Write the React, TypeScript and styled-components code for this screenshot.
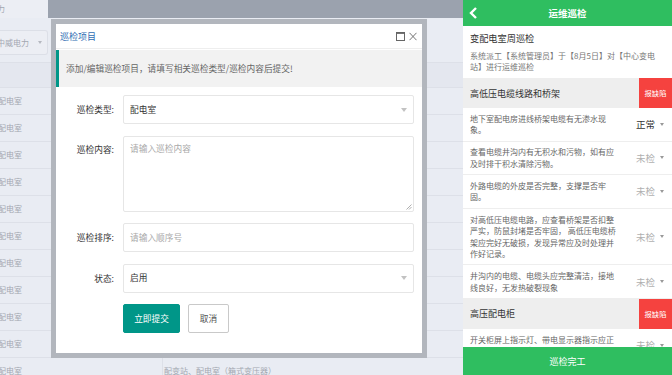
import styled, { createGlobalStyle } from 'styled-components'

const GlobalStyle = createGlobalStyle`
  html, body {
    margin: 0;
    padding: 0;
  }
  body {
    width: 672px;
    height: 375px;
    overflow: hidden;
    font-family: "Noto Sans CJK SC", "Liberation Sans", sans-serif;
  }
`

const Page = styled.div`
  display: flex;
  width: 672px;
  height: 375px;
  overflow: hidden;
`

/* 背景的管理页面 */
const AdminPane = styled.div`
  position: relative;
  flex: 1;
  display: flex;
  flex-direction: column;
  background: #e9ecf3;
  overflow: hidden;
`

const TopStrip = styled.div`
  display: flex;
  height: 18px;
  flex-shrink: 0;
`

const TopCrumb = styled.div`
  width: 48px;
  background: #eceef4;
  overflow: hidden;
  white-space: nowrap;
  font-size: 8px;
  line-height: 18px;
  color: #a3a7b1;

  span {
    margin-left: -27px;
  }
`

const TopTabs = styled.div`
  flex: 1;
  background: #9ba2ae;
`

const FilterBar = styled.div`
  height: 44px;
  padding-top: 12px;
  box-sizing: border-box;
  flex-shrink: 0;
`

const FilterSelect = styled.div`
  width: 48px;
  height: 25px;
  box-sizing: border-box;
  display: flex;
  align-items: center;
  justify-content: space-between;
  padding-right: 5px;
  border: 1px solid #dcdfe7;
  border-left: none;
  border-radius: 0 3px 3px 0;
  background: #eceef4;
  overflow: hidden;
  white-space: nowrap;
  font-size: 8px;
  color: #a3a7b1;

  span {
    margin-left: -3px;
  }
`

const TinyArrow = styled.i<{ $color?: string; $size?: number }>`
  display: block;
  flex-shrink: 0;
  width: 0;
  height: 0;
  border-left: ${({ $size = 3 }) => $size}px solid transparent;
  border-right: ${({ $size = 3 }) => $size}px solid transparent;
  border-top: ${({ $size = 3 }) => $size + 0.5}px solid ${({ $color }) => $color ?? '#b5b8c0'};
`

const TableHead = styled.div`
  height: 26px;
  flex-shrink: 0;
  box-sizing: border-box;
  background: #e4e7ef;
  border-top: 1px solid #dde0e8;
  border-bottom: 1px solid #dde0e8;
`

const TableRow = styled.div`
  display: grid;
  grid-template-columns: 162px 1fr;
  height: 27px;
  flex-shrink: 0;
  box-sizing: border-box;
  border-bottom: 1px solid #dde0e8;
  font-size: 8px;
  line-height: 26px;
  color: #a3a7b1;
`

const TableCell = styled.div<{ $first?: boolean }>`
  overflow: hidden;
  white-space: nowrap;
  padding-left: ${({ $first }) => ($first ? 0 : 1)}px;
  text-indent: ${({ $first }) => ($first ? -2 : 0)}px;
  border-left: ${({ $first }) => ($first ? 'none' : '1px solid #dde0e8')};
`

/* 弹出层 */
const Dialog = styled.div`
  position: absolute;
  left: 51px;
  top: 19px;
  width: 376px;
  height: 339px;
  box-sizing: border-box;
  display: flex;
  flex-direction: column;
  border: 5px solid #b2b6bd;
  background: #fff;
`

const DialogTitle = styled.div`
  height: 25px;
  flex-shrink: 0;
  box-sizing: border-box;
  display: flex;
  align-items: center;
  justify-content: space-between;
  padding: 0 5px 0 4px;
  border-bottom: 1px solid #eeeeee;
  font-size: 9px;
  color: #2f6db3;
`

const TitleTools = styled.div`
  display: flex;
  align-items: center;
  gap: 4px;
  color: #666;
`

const Notice = styled.div`
  margin-top: 1px;
  height: 37px;
  flex-shrink: 0;
  display: flex;
  align-items: center;
  padding-left: 7px;
  border-left: 3px solid #009688;
  background: #f2f2f2;
  font-size: 8.7px;
  color: #666;
`

const Form = styled.div`
  display: flex;
  flex-direction: column;
  gap: 11.5px;
  padding: 8px 8px 0 0;
`

const FormRow = styled.div<{ $top?: boolean }>`
  display: flex;
  align-items: ${({ $top }) => ($top ? 'flex-start' : 'center')};
`

const Label = styled.label`
  width: 67px;
  flex-shrink: 0;
  box-sizing: border-box;
  padding-right: 9px;
  text-align: right;
  font-size: 8.7px;
  line-height: 27px;
  color: #333;
`

const Field = styled.div<{ $placeholder?: boolean; $multi?: boolean }>`
  flex: 1;
  height: ${({ $multi }) => ($multi ? 76 : 29)}px;
  box-sizing: border-box;
  display: flex;
  flex-direction: ${({ $multi }) => ($multi ? 'column' : 'row')};
  align-items: ${({ $multi }) => ($multi ? 'flex-start' : 'center')};
  justify-content: space-between;
  padding: ${({ $multi }) => ($multi ? '6px 1px 1px 6px' : '0 6px 0 6px')};
  border: 1px solid #e6e6e6;
  border-radius: 2px;
  font-size: 8.7px;
  line-height: 12px;
  color: ${({ $placeholder }) => ($placeholder ? '#a9a9a9' : '#333')};
`

const Grip = styled.svg`
  align-self: flex-end;
  display: block;
`

const Buttons = styled.div`
  display: flex;
  gap: 8px;
  padding-left: 67px;
`

const Button = styled.button<{ $primary?: boolean }>`
  height: 29px;
  width: ${({ $primary }) => ($primary ? 57 : 41)}px;
  padding: 0;
  box-sizing: border-box;
  border: 1px solid ${({ $primary }) => ($primary ? '#009688' : '#c9c9c9')};
  border-radius: 2px;
  background: ${({ $primary }) => ($primary ? '#009688' : '#fff')};
  color: ${({ $primary }) => ($primary ? '#fff' : '#555')};
  font-family: inherit;
  font-size: 8.7px;
`

/* 右侧手机端 */
const Mobile = styled.div`
  width: 209px;
  flex-shrink: 0;
  display: flex;
  flex-direction: column;
  background: #fff;
`

const MobileHeader = styled.div`
  height: 26px;
  flex-shrink: 0;
  display: grid;
  grid-template-columns: 1fr auto 1fr;
  align-items: center;
  background: #2fbe60;
  color: #fff;
  font-size: 9.5px;
  font-weight: 700;
`

const Back = styled.svg`
  display: block;
  margin-left: 6px;
`

const MobileBody = styled.div`
  flex: 1;
  overflow: hidden;
`

const TaskCard = styled.div`
  padding: 6px 7px;
`

const TaskTitle = styled.div`
  font-size: 9.2px;
  line-height: 13px;
  color: #333;
`

const TaskDesc = styled.div`
  margin-top: 5px;
  font-size: 8px;
  line-height: 11px;
  color: #777;
  white-space: nowrap;
`

const SectionHead = styled.div`
  display: flex;
  height: 30px;
  background: #eeeeee;
`

const SectionName = styled.div`
  flex: 1;
  display: flex;
  align-items: center;
  padding-left: 7px;
  font-size: 9px;
  color: #333;
`

const ReportButton = styled.div`
  width: 33px;
  display: flex;
  align-items: center;
  justify-content: center;
  background: #f5423f;
  color: #fff;
  font-size: 7.3px;
`

const CheckItem = styled.div`
  display: flex;
  align-items: center;
  padding: 4.8px 8px 4.8px 7px;
  border-bottom: 1px solid #eeeeee;
`

const ItemText = styled.div`
  flex: 1;
  font-size: 8px;
  line-height: 11.5px;
  color: #666;
  white-space: nowrap;
`

const Status = styled.div<{ $done?: boolean }>`
  display: flex;
  align-items: center;
  gap: 5px;
  font-size: 9.5px;
  color: ${({ $done }) => ($done ? '#333' : '#b0b0b0')};
`

const MobileFooter = styled.div`
  height: 28px;
  flex-shrink: 0;
  display: flex;
  align-items: center;
  justify-content: center;
  background: #2fbe60;
  color: #fff;
  font-size: 9px;
`

interface Item {
  lines: string[]
  status: string
}

const sections: { name: string; items: Item[] }[] = [
  {
    name: '高低压电缆线路和桥架',
    items: [
      { lines: ['地下室配电房进线桥架电缆有无渗水现', '象。'], status: '正常' },
      { lines: ['查看电缆井沟内有无积水和污物，如有应', '及时排干积水清除污物。'], status: '未检' },
      { lines: ['外路电缆的外皮是否完整，支撑是否牢', '固。'], status: '未检' },
      {
        lines: [
          '对高低压电缆电路，应查看桥架是否扣整',
          '严实，防鼠封堵是否牢固， 高低压电缆桥',
          '架应完好无破损，发现异常应及时处理并',
          '作好记录。',
        ],
        status: '未检',
      },
      { lines: ['井沟内的电缆、电缆头应完整清洁，接地', '线良好，无发热破裂现象'], status: '未检' },
    ],
  },
  {
    name: '高压配电柜',
    items: [{ lines: ['开关柜屏上指示灯、带电显示器指示应正', '常，柜内无异常声响。'], status: '未检' }],
  },
]

const rowCount = 11

export default function App() {
  return (
    <>
      <GlobalStyle />
      <Page>
        <AdminPane>
          <TopStrip>
            <TopCrumb>
              <span>中威电力</span>
            </TopCrumb>
            <TopTabs />
          </TopStrip>
          <FilterBar>
            <FilterSelect>
              <span>中威电力</span>
              <TinyArrow $size={2.5} />
            </FilterSelect>
          </FilterBar>
          <TableHead />
          {Array.from({ length: rowCount }, (_, i) => (
            <TableRow key={i}>
              <TableCell $first>配电室</TableCell>
              <TableCell>配变站、配电室（箱式变压器）</TableCell>
            </TableRow>
          ))}

          <Dialog>
            <DialogTitle>
              <span>巡检项目</span>
              <TitleTools>
                <svg width="9" height="9" viewBox="0 0 9 9">
                  <rect x="0.5" y="0.5" width="8" height="8" fill="none" stroke="currentColor" />
                  <line x1="0.5" y1="1.2" x2="8.5" y2="1.2" stroke="currentColor" strokeWidth="1.4" />
                </svg>
                <svg width="8" height="9" viewBox="0 0 8 9">
                  <path d="M0.5 0.8 L7.5 8.2 M7.5 0.8 L0.5 8.2" stroke="currentColor" strokeWidth="0.9" />
                </svg>
              </TitleTools>
            </DialogTitle>
            <Notice>添加/编辑巡检项目，请填写相关巡检类型/巡检内容后提交!</Notice>
            <Form>
              <FormRow>
                <Label>巡检类型:</Label>
                <Field>
                  <span>配电室</span>
                  <TinyArrow $color="#c2c2c2" $size={3.5} />
                </Field>
              </FormRow>
              <FormRow $top>
                <Label>巡检内容:</Label>
                <Field $multi $placeholder>
                  <span>请输入巡检内容</span>
                  <Grip width="6" height="6" viewBox="0 0 6 6">
                    <path d="M5.5 0.5 L0.5 5.5 M5.5 3 L3 5.5" stroke="#9a9a9a" strokeWidth="0.8" />
                  </Grip>
                </Field>
              </FormRow>
              <FormRow>
                <Label>巡检排序:</Label>
                <Field $placeholder>
                  <span>请输入顺序号</span>
                </Field>
              </FormRow>
              <FormRow>
                <Label>状态:</Label>
                <Field>
                  <span>启用</span>
                  <TinyArrow $color="#c2c2c2" $size={3.5} />
                </Field>
              </FormRow>
              <Buttons>
                <Button $primary>立即提交</Button>
                <Button>取消</Button>
              </Buttons>
            </Form>
          </Dialog>
        </AdminPane>

        <Mobile>
          <MobileHeader>
            <Back width="9" height="12" viewBox="0 0 9 12">
              <polyline points="7,1 2,6 7,11" fill="none" stroke="#fff" strokeWidth="2.4" />
            </Back>
            <span>运维巡检</span>
            <span />
          </MobileHeader>
          <MobileBody>
            <TaskCard>
              <TaskTitle>变配电室周巡检</TaskTitle>
              <TaskDesc>
                系统派工【系统管理员】于【8月5日】对【中心变电
                <br />
                站】进行运维巡检
              </TaskDesc>
            </TaskCard>
            {sections.map((section) => (
              <div key={section.name}>
                <SectionHead>
                  <SectionName>{section.name}</SectionName>
                  <ReportButton>报缺陷</ReportButton>
                </SectionHead>
                {section.items.map((item) => (
                  <CheckItem key={item.lines[0]}>
                    <ItemText>
                      {item.lines.map((line, i) => (
                        <div key={i}>{line}</div>
                      ))}
                    </ItemText>
                    <Status $done={item.status === '正常'}>
                      {item.status}
                      <TinyArrow $color="#999" $size={2.5} />
                    </Status>
                  </CheckItem>
                ))}
              </div>
            ))}
          </MobileBody>
          <MobileFooter>巡检完工</MobileFooter>
        </Mobile>
      </Page>
    </>
  )
}
